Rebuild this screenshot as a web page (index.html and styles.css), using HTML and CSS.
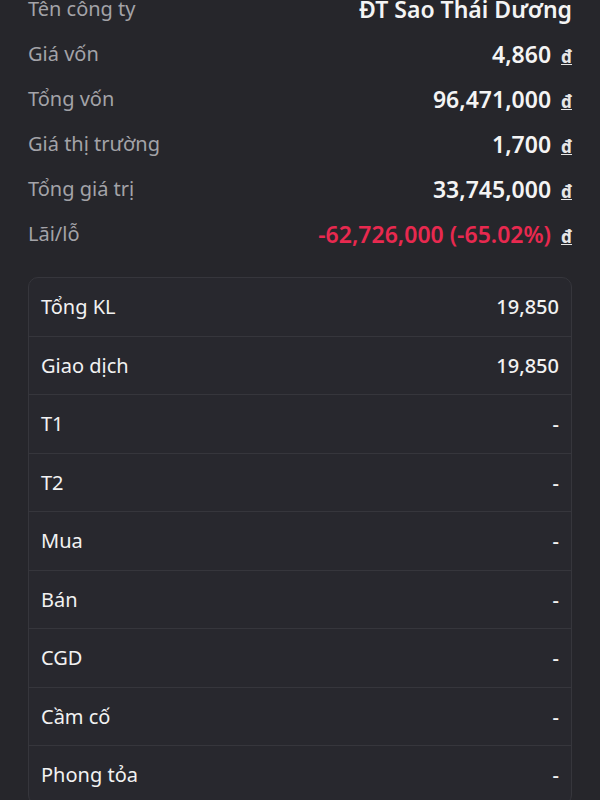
FILE: index.html
```html
<!doctype html>
<html>
<head>
  <meta charset="utf8">
  <title>Chi tiết tài sản</title>
  <link rel="stylesheet" href="styles.css">
</head>
<body>
  <div class="page">
    <div class="summary">
      <div class="summary-row">
        <span class="label">Tên công ty</span>
        <span class="value">ĐT Sao Thái Dương</span>
      </div>
      <div class="summary-row">
        <span class="label">Giá vốn</span>
        <span class="value">4,860 <u class="cur">đ</u></span>
      </div>
      <div class="summary-row">
        <span class="label">Tổng vốn</span>
        <span class="value">96,471,000 <u class="cur">đ</u></span>
      </div>
      <div class="summary-row">
        <span class="label">Giá thị trường</span>
        <span class="value">1,700 <u class="cur">đ</u></span>
      </div>
      <div class="summary-row">
        <span class="label">Tổng giá trị</span>
        <span class="value">33,745,000 <u class="cur">đ</u></span>
      </div>
      <div class="summary-row">
        <span class="label">Lãi/lỗ</span>
        <span class="value"><span class="loss">-62,726,000 (-65.02%)</span> <u class="cur">đ</u></span>
      </div>
    </div>

    <div class="card">
      <div class="card-row"><span>Tổng KL</span><span class="num">19,850</span></div>
      <div class="card-row"><span>Giao dịch</span><span class="num">19,850</span></div>
      <div class="card-row"><span>T1</span><span class="num">-</span></div>
      <div class="card-row"><span>T2</span><span class="num">-</span></div>
      <div class="card-row"><span>Mua</span><span class="num">-</span></div>
      <div class="card-row"><span>Bán</span><span class="num">-</span></div>
      <div class="card-row"><span>CGD</span><span class="num">-</span></div>
      <div class="card-row"><span>Cầm cố</span><span class="num">-</span></div>
      <div class="card-row"><span>Phong tỏa</span><span class="num">-</span></div>
    </div>
  </div>
</body>
</html>
```

FILE: styles.css
```css
html, body {
  margin: 0;
  padding: 0;
  height: 100%;
  overflow: hidden;
  background: #26262b;
  font-family: 'Noto Sans', 'Open Sans', sans-serif;
  color: #f2f2f2;
}

/* screen is scrolled a little, first row is cut off */
.page {
  margin-top: -14px;
  padding: 0 28px;
}

.summary-row {
  display: flex;
  justify-content: space-between;
  align-items: center;
  height: 45px;
}

.label {
  font-size: 20px;
  color: #a3a3a8;
}

.value {
  font-size: 23px;
  font-weight: 600;
  color: #f4f4f4;
}

.loss {
  color: #e8294f;
}

.cur {
  margin-left: 4px;
  font-size: 17px;
  font-weight: 700;
  color: #e6e6e6;
}

.card {
  margin-top: 21px;
  border: 1px solid #36363c;
  border-radius: 10px;
  background: #28282e;
}

.card-row {
  display: flex;
  justify-content: space-between;
  align-items: center;
  height: 57.5px;
  padding: 0 12px;
  border-bottom: 1px solid #36363c;
  font-size: 20px;
  color: #f2f2f2;
}

.card-row:last-child {
  border-bottom: none;
}

.num {
  font-weight: 500;
}
```
